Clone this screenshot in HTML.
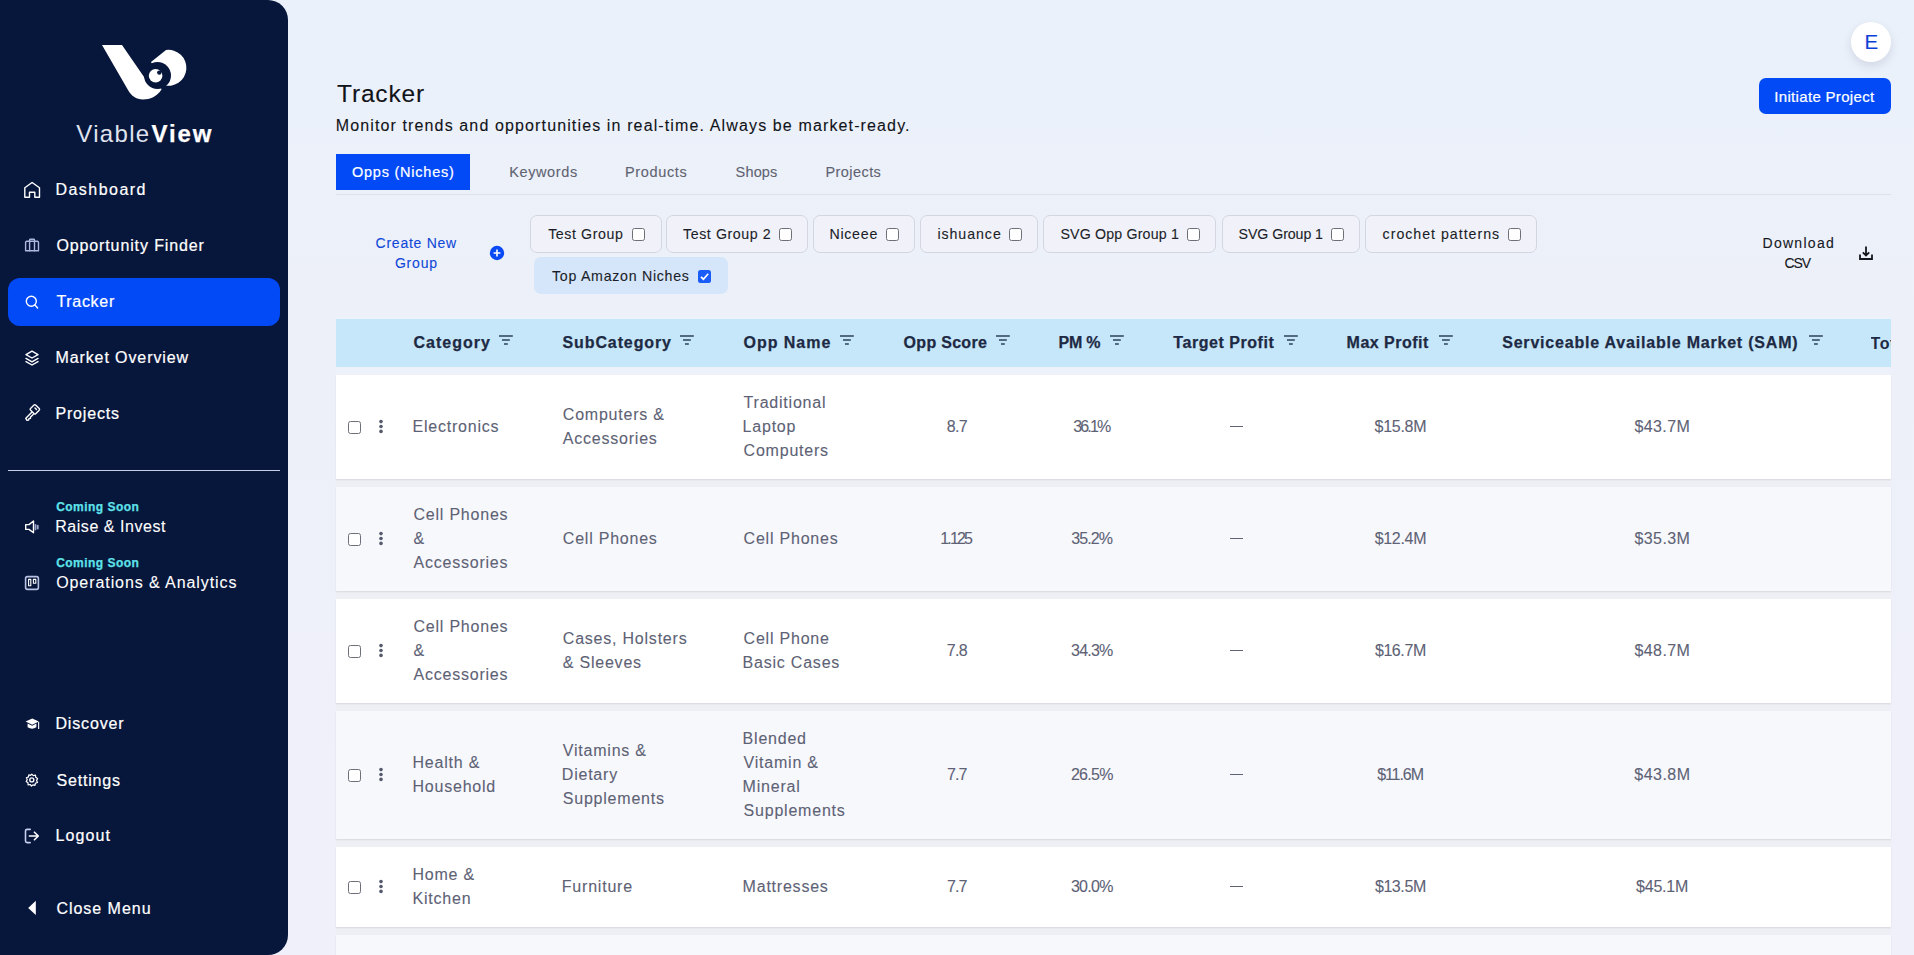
<!DOCTYPE html>
<html><head><meta charset="utf-8"><title>Tracker</title>
<style>
html,body{margin:0;padding:0;}
body{width:1914px;height:955px;overflow:hidden;position:relative;font-family:"Liberation Sans", sans-serif;background:linear-gradient(180deg,#eaf1fa 0%,#edf0f9 35%,#f0f0fa 100%);}
span{font-family:"Liberation Sans", sans-serif;}
</style></head><body>
<div style="position:absolute;left:0px;top:0px;width:288px;height:955px;background:#07163b;border-radius:0 20px 20px 0;"></div>
<svg style="position:absolute;left:0;top:0" width="288" height="160" viewBox="0 0 288 160">
<path d="M102,45 L122,45 L147.5,82 L157.5,75.5 L161.5,89.5 C157,96.5 150,99.5 143,99.5 C136,99.5 131,95.5 128,90 Z" fill="#fff"/>
<path d="M151,62 L166,50 A18,18 0 1 1 163,85 Z" fill="#fff"/>
<circle cx="157.5" cy="75.5" r="13.5" fill="#07163b"/>
<circle cx="155.6" cy="75.8" r="6.8" fill="#fff"/>
<circle cx="159.3" cy="72.6" r="2.2" fill="#07163b"/>
</svg>
<div style="position:absolute;left:8px;top:278px;width:272px;height:48px;background:#024af6;border-radius:12px;"></div>
<div style="position:absolute;left:8px;top:470px;width:272px;height:1px;background:#c9d0e6;"></div>
<svg style="position:absolute;left:0;top:160px" width="60" height="795" viewBox="0 160 60 795" fill="none" stroke="#fff" stroke-width="1.4" stroke-linejoin="round" stroke-linecap="round">
<path d="M24.8,197.3 V187.8 L32.1,182.5 L39.5,187.8 V197.3 H34.8 V192.2 H29.5 V197.3 Z"/>
<g stroke="#aeb8dc"><path d="M25.6,250.8 V242.5 Q25.6,241.3 26.8,241.3 H37.3 Q38.5,241.3 38.5,242.5 V250.8 Z"/><path d="M29.6,250.8 V241.3 M34.5,250.8 V241.3 M29.6,241.3 V240 Q29.6,239.3 30.4,239.3 H33.7 Q34.5,239.3 34.5,240 V241.3"/></g>
<circle cx="31.3" cy="301.2" r="5"/><path d="M35,305 L37.6,308"/>
<path d="M26,354.6 L32,351.2 L38,354.6 L32,358 Z"/><path d="M26,358.4 L32,361.8 L38,358.4"/><path d="M26,361.6 L32,365 L38,361.6"/>
<path d="M30.5,408.5 L34,405 Q34.8,404.3 35.6,405 L39.2,408.6 Q40,409.4 39.2,410.2 L35.7,413.7 Q34.9,414.5 34.1,413.7 L30.5,410.1 Q29.7,409.3 30.5,408.5 Z"/>
<path d="M31.8,412.3 L25.8,418.3 L26.8,420.2 L28.6,420 L29,418.6 L30.4,418.3 L30.6,417 L33.2,414.5"/><path d="M35,408 L36.5,409.5"/>
<path d="M25.7,524.6 H29 L33.5,521 V532.8 L29,529.4 H25.7 Z"/>
<path d="M35.5,524.8 V529.4 M37.8,525.6 V528.6" stroke="#9aa4c8" stroke-width="1.8"/>
<rect x="25.6" y="576.6" width="12.8" height="12.8" rx="1.8" stroke="#b8c2e2" stroke-width="1.6"/>
<rect x="28.6" y="579.4" width="2.2" height="6.3" stroke-width="1.1"/><rect x="33.4" y="579.4" width="2.4" height="3.9" stroke-width="1.1"/>
<g fill="#fff" stroke="none"><path d="M25.6,721.6 L32.2,718.6 L38.9,721.6 L32.2,724.8 Z"/><path d="M27.6,723.5 L32.2,725.8 L36.4,723.5 V727.3 Q32.2,730 27.6,727.3 Z"/><rect x="38.1" y="722" width="1.1" height="7"/></g>
<circle cx="31.8" cy="779.9" r="2"/>
<path d="M31.8,774.2 L33.3,775.6 L35.5,775.1 L35.7,777.2 L37.6,778.5 L36.6,780.4 L37.5,782.4 L35.4,783.2 L35,785.3 L32.9,784.9 L31.5,786 L30.2,784.5 L28.1,784.8 L28,782.8 L26.2,781.5 L27.2,779.6 L26.4,777.7 L28.5,776.9 L28.8,774.8 L30.5,775.3 Z" stroke-width="1.2"/>
<path d="M30.2,829.4 H27.2 Q25.5,829.4 25.5,831 V841 Q25.5,842.6 27.2,842.6 H30.2" stroke="#c7cfee" stroke-width="1.6"/>
<path d="M29.4,836 H38.3 M34.4,832.2 L38.3,836 L34.4,839.8" stroke-width="1.6"/>
<path d="M28.2,907.9 L35.8,900.8 V915 Z" fill="#fff" stroke="none"/>
</svg>
<div style="position:absolute;left:1851px;top:22px;width:40px;height:40px;background:#fff;border-radius:50%;box-shadow:0 4px 10px rgba(30,40,80,0.12);"></div>
<div style="position:absolute;left:1759px;top:78px;width:132px;height:36px;background:#024af6;border-radius:7px;"></div>
<div style="position:absolute;left:336px;top:154px;width:134px;height:36px;background:#024af6;"></div>
<div style="position:absolute;left:336px;top:194px;width:1555px;height:1px;background:#dfe2ea;"></div>
<svg style="position:absolute;left:489px;top:245px" width="16" height="16" viewBox="0 0 16 16"><circle cx="8" cy="8" r="7.2" fill="#0a4af5"/><path d="M8,4.6 V11.4 M4.6,8 H11.4" stroke="#fff" stroke-width="1.6"/></svg>
<div style="position:absolute;left:530.2px;top:215px;width:131.5px;height:38px;box-sizing:border-box;border:1px solid #d3d6e0;border-radius:7px;background:#f1f2f9;"></div>
<div style="position:absolute;left:632px;top:227.5px;width:13px;height:13px;box-sizing:border-box;border:1.2px solid #6e7079;border-radius:2.5px;background:#fff;"></div>
<div style="position:absolute;left:666.4px;top:215px;width:142.0px;height:38px;box-sizing:border-box;border:1px solid #d3d6e0;border-radius:7px;background:#f1f2f9;"></div>
<div style="position:absolute;left:778.9px;top:227.5px;width:13px;height:13px;box-sizing:border-box;border:1.2px solid #6e7079;border-radius:2.5px;background:#fff;"></div>
<div style="position:absolute;left:813.2px;top:215px;width:102.29999999999995px;height:38px;box-sizing:border-box;border:1px solid #d3d6e0;border-radius:7px;background:#f1f2f9;"></div>
<div style="position:absolute;left:886.2px;top:227.5px;width:13px;height:13px;box-sizing:border-box;border:1.2px solid #6e7079;border-radius:2.5px;background:#fff;"></div>
<div style="position:absolute;left:920.2px;top:215px;width:118.29999999999995px;height:38px;box-sizing:border-box;border:1px solid #d3d6e0;border-radius:7px;background:#f1f2f9;"></div>
<div style="position:absolute;left:1009px;top:227.5px;width:13px;height:13px;box-sizing:border-box;border:1.2px solid #6e7079;border-radius:2.5px;background:#fff;"></div>
<div style="position:absolute;left:1043.2px;top:215px;width:173.29999999999995px;height:38px;box-sizing:border-box;border:1px solid #d3d6e0;border-radius:7px;background:#f1f2f9;"></div>
<div style="position:absolute;left:1187px;top:227.5px;width:13px;height:13px;box-sizing:border-box;border:1.2px solid #6e7079;border-radius:2.5px;background:#fff;"></div>
<div style="position:absolute;left:1221.6px;top:215px;width:138.70000000000005px;height:38px;box-sizing:border-box;border:1px solid #d3d6e0;border-radius:7px;background:#f1f2f9;"></div>
<div style="position:absolute;left:1331.4px;top:227.5px;width:13px;height:13px;box-sizing:border-box;border:1.2px solid #6e7079;border-radius:2.5px;background:#fff;"></div>
<div style="position:absolute;left:1365.3px;top:215px;width:172.10000000000014px;height:38px;box-sizing:border-box;border:1px solid #d3d6e0;border-radius:7px;background:#f1f2f9;"></div>
<div style="position:absolute;left:1508.1px;top:227.5px;width:13px;height:13px;box-sizing:border-box;border:1.2px solid #6e7079;border-radius:2.5px;background:#fff;"></div>
<div style="position:absolute;left:534px;top:257px;width:194px;height:37px;background:#d5e6fb;border-radius:7px;"></div>
<svg style="position:absolute;left:698px;top:270px" width="13" height="13" viewBox="0 0 13 13"><rect x="0" y="0" width="13" height="13" rx="2.5" fill="#1a5cf8"/><path d="M3,6.8 L5.4,9.2 L10.2,3.8" stroke="#fff" stroke-width="1.7" fill="none"/></svg>
<svg style="position:absolute;left:1858px;top:245px" width="16" height="16" viewBox="0 0 16 16" fill="none" stroke="#15171d" stroke-width="1.8"><path d="M2,9.5 V14 H14 V9.5"/><path d="M8,1.5 V10.5 M4.8,7.3 L8,10.5 L11.2,7.3"/></svg>
<div style="position:absolute;left:336px;top:316px;width:1555px;height:59px;background:#edf2fa;"></div>
<div style="position:absolute;left:336px;top:375px;width:1555px;height:580px;background:#eeeff4;"></div>
<div style="position:absolute;left:336px;top:319px;width:1555px;height:48px;background:#c6e7f9;"></div>
<div style="position:absolute;left:336px;top:367px;width:1555px;height:8px;background:#edf1f9;"></div>
<svg style="position:absolute;left:499px;top:334px" width="14" height="12" viewBox="0 0 14 12" stroke="#536b80" stroke-width="1.8"><path d="M0,2 H13.8 M3,6 H10.8 M5,10 H8.8"/></svg>
<svg style="position:absolute;left:680px;top:334px" width="14" height="12" viewBox="0 0 14 12" stroke="#536b80" stroke-width="1.8"><path d="M0,2 H13.8 M3,6 H10.8 M5,10 H8.8"/></svg>
<svg style="position:absolute;left:840.2px;top:334px" width="14" height="12" viewBox="0 0 14 12" stroke="#536b80" stroke-width="1.8"><path d="M0,2 H13.8 M3,6 H10.8 M5,10 H8.8"/></svg>
<svg style="position:absolute;left:996px;top:334px" width="14" height="12" viewBox="0 0 14 12" stroke="#536b80" stroke-width="1.8"><path d="M0,2 H13.8 M3,6 H10.8 M5,10 H8.8"/></svg>
<svg style="position:absolute;left:1110.1px;top:334px" width="14" height="12" viewBox="0 0 14 12" stroke="#536b80" stroke-width="1.8"><path d="M0,2 H13.8 M3,6 H10.8 M5,10 H8.8"/></svg>
<svg style="position:absolute;left:1284.1px;top:334px" width="14" height="12" viewBox="0 0 14 12" stroke="#536b80" stroke-width="1.8"><path d="M0,2 H13.8 M3,6 H10.8 M5,10 H8.8"/></svg>
<svg style="position:absolute;left:1439.3px;top:334px" width="14" height="12" viewBox="0 0 14 12" stroke="#536b80" stroke-width="1.8"><path d="M0,2 H13.8 M3,6 H10.8 M5,10 H8.8"/></svg>
<svg style="position:absolute;left:1808.6px;top:334px" width="14" height="12" viewBox="0 0 14 12" stroke="#536b80" stroke-width="1.8"><path d="M0,2 H13.8 M3,6 H10.8 M5,10 H8.8"/></svg>
<div style="position:absolute;left:1871px;top:319px;width:20px;height:48px;overflow:hidden;"><span style="position:absolute;left:-0.5px;top:16.5px;font-family:&quot;Liberation Sans&quot;, sans-serif;font-size:16px;line-height:16px;font-weight:700;color:#1e2a44;letter-spacing:0.6px;white-space:nowrap">Total</span></div>
<div style="position:absolute;left:336px;top:375px;width:1555px;height:104px;background:#ffffff;box-shadow:0 1px 1.5px rgba(20,20,40,0.10);"></div>
<div style="position:absolute;left:348px;top:421.0px;width:13px;height:13px;box-sizing:border-box;border:1.2px solid #6e7079;border-radius:2.5px;background:#fff;"></div>
<svg style="position:absolute;left:377px;top:419.0px" width="8" height="16" viewBox="0 0 8 16" fill="#545a6b"><circle cx="4" cy="2.6" r="1.8"/><circle cx="4" cy="7.5" r="1.8"/><circle cx="4" cy="12.4" r="1.8"/></svg>
<div style="position:absolute;left:1229.5px;top:425.8px;width:13px;height:1.7px;background:#5d6275;"></div>
<div style="position:absolute;left:336px;top:487px;width:1555px;height:104px;background:#f7f8fc;box-shadow:0 1px 1.5px rgba(20,20,40,0.10);"></div>
<div style="position:absolute;left:348px;top:533.0px;width:13px;height:13px;box-sizing:border-box;border:1.2px solid #6e7079;border-radius:2.5px;background:#fff;"></div>
<svg style="position:absolute;left:377px;top:531.0px" width="8" height="16" viewBox="0 0 8 16" fill="#545a6b"><circle cx="4" cy="2.6" r="1.8"/><circle cx="4" cy="7.5" r="1.8"/><circle cx="4" cy="12.4" r="1.8"/></svg>
<div style="position:absolute;left:1229.5px;top:537.8px;width:13px;height:1.7px;background:#5d6275;"></div>
<div style="position:absolute;left:336px;top:599px;width:1555px;height:104px;background:#ffffff;box-shadow:0 1px 1.5px rgba(20,20,40,0.10);"></div>
<div style="position:absolute;left:348px;top:645.0px;width:13px;height:13px;box-sizing:border-box;border:1.2px solid #6e7079;border-radius:2.5px;background:#fff;"></div>
<svg style="position:absolute;left:377px;top:643.0px" width="8" height="16" viewBox="0 0 8 16" fill="#545a6b"><circle cx="4" cy="2.6" r="1.8"/><circle cx="4" cy="7.5" r="1.8"/><circle cx="4" cy="12.4" r="1.8"/></svg>
<div style="position:absolute;left:1229.5px;top:649.8px;width:13px;height:1.7px;background:#5d6275;"></div>
<div style="position:absolute;left:336px;top:711px;width:1555px;height:128px;background:#f7f8fc;box-shadow:0 1px 1.5px rgba(20,20,40,0.10);"></div>
<div style="position:absolute;left:348px;top:769.0px;width:13px;height:13px;box-sizing:border-box;border:1.2px solid #6e7079;border-radius:2.5px;background:#fff;"></div>
<svg style="position:absolute;left:377px;top:767.0px" width="8" height="16" viewBox="0 0 8 16" fill="#545a6b"><circle cx="4" cy="2.6" r="1.8"/><circle cx="4" cy="7.5" r="1.8"/><circle cx="4" cy="12.4" r="1.8"/></svg>
<div style="position:absolute;left:1229.5px;top:773.8px;width:13px;height:1.7px;background:#5d6275;"></div>
<div style="position:absolute;left:336px;top:847px;width:1555px;height:80px;background:#ffffff;box-shadow:0 1px 1.5px rgba(20,20,40,0.10);"></div>
<div style="position:absolute;left:348px;top:881.0px;width:13px;height:13px;box-sizing:border-box;border:1.2px solid #6e7079;border-radius:2.5px;background:#fff;"></div>
<svg style="position:absolute;left:377px;top:879.0px" width="8" height="16" viewBox="0 0 8 16" fill="#545a6b"><circle cx="4" cy="2.6" r="1.8"/><circle cx="4" cy="7.5" r="1.8"/><circle cx="4" cy="12.4" r="1.8"/></svg>
<div style="position:absolute;left:1229.5px;top:885.8px;width:13px;height:1.7px;background:#5d6275;"></div>
<div style="position:absolute;left:336px;top:935px;width:1555px;height:20px;background:#f7f8fc;box-shadow:0 1px 1.5px rgba(20,20,40,0.10);"></div>
<span style="position:absolute;left:76.30px;top:122.00px;font-size:24px;line-height:24px;font-weight:300;color:#dfe3ee;letter-spacing:1.313px;white-space:pre;z-index:5">Viable</span>
<span style="position:absolute;left:151.50px;top:122.00px;font-size:24px;line-height:24px;font-weight:700;color:#fff;letter-spacing:1.903px;white-space:pre;-webkit-text-stroke:0.25px #fff;z-index:5">View</span>
<span style="position:absolute;left:55.40px;top:182.00px;font-size:16px;line-height:16px;font-weight:500;color:#fff;letter-spacing:1.478px;white-space:pre;-webkit-text-stroke:0.22px #fff;z-index:5">Dashboard</span>
<span style="position:absolute;left:56.40px;top:238.00px;font-size:16px;line-height:16px;font-weight:500;color:#fff;letter-spacing:0.884px;white-space:pre;-webkit-text-stroke:0.22px #fff;z-index:5">Opportunity Finder</span>
<span style="position:absolute;left:56.40px;top:294.00px;font-size:16px;line-height:16px;font-weight:500;color:#fff;letter-spacing:0.699px;white-space:pre;-webkit-text-stroke:0.22px #fff;z-index:5">Tracker</span>
<span style="position:absolute;left:55.40px;top:350.00px;font-size:16px;line-height:16px;font-weight:500;color:#fff;letter-spacing:0.909px;white-space:pre;-webkit-text-stroke:0.22px #fff;z-index:5">Market Overview</span>
<span style="position:absolute;left:55.40px;top:406.00px;font-size:16px;line-height:16px;font-weight:500;color:#fff;letter-spacing:0.843px;white-space:pre;-webkit-text-stroke:0.22px #fff;z-index:5">Projects</span>
<span style="position:absolute;left:55.40px;top:716.00px;font-size:16px;line-height:16px;font-weight:500;color:#fff;letter-spacing:0.856px;white-space:pre;-webkit-text-stroke:0.22px #fff;z-index:5">Discover</span>
<span style="position:absolute;left:56.40px;top:773.00px;font-size:16px;line-height:16px;font-weight:500;color:#fff;letter-spacing:0.841px;white-space:pre;-webkit-text-stroke:0.22px #fff;z-index:5">Settings</span>
<span style="position:absolute;left:55.40px;top:828.00px;font-size:16px;line-height:16px;font-weight:500;color:#fff;letter-spacing:1.102px;white-space:pre;-webkit-text-stroke:0.22px #fff;z-index:5">Logout</span>
<span style="position:absolute;left:56.40px;top:901.00px;font-size:16px;line-height:16px;font-weight:500;color:#fff;letter-spacing:0.980px;white-space:pre;-webkit-text-stroke:0.22px #fff;z-index:5">Close Menu</span>
<span style="position:absolute;left:55.20px;top:519.00px;font-size:16px;line-height:16px;font-weight:400;color:#fff;letter-spacing:0.545px;white-space:pre;-webkit-text-stroke:0.1px #fff;z-index:5">Raise &amp; Invest</span>
<span style="position:absolute;left:56.20px;top:575.00px;font-size:16px;line-height:16px;font-weight:400;color:#fff;letter-spacing:0.921px;white-space:pre;-webkit-text-stroke:0.1px #fff;z-index:5">Operations &amp; Analytics</span>
<span style="position:absolute;left:56.20px;top:501.00px;font-size:12px;line-height:12px;font-weight:700;color:#5ee2ea;letter-spacing:0.464px;white-space:pre;-webkit-text-stroke:0.25px #5ee2ea;z-index:5">Coming Soon</span>
<span style="position:absolute;left:56.20px;top:557.00px;font-size:12px;line-height:12px;font-weight:700;color:#5ee2ea;letter-spacing:0.464px;white-space:pre;-webkit-text-stroke:0.25px #5ee2ea;z-index:5">Coming Soon</span>
<span style="position:absolute;left:337.00px;top:82.00px;font-size:24.5px;line-height:24.5px;font-weight:400;color:#111318;letter-spacing:0.839px;white-space:pre;-webkit-text-stroke:0.1px #111318;z-index:5">Tracker</span>
<span style="position:absolute;left:335.70px;top:118.00px;font-size:16px;line-height:16px;font-weight:400;color:#111318;letter-spacing:1.129px;white-space:pre;-webkit-text-stroke:0.1px #111318;z-index:5">Monitor trends and opportunities in real-time. Always be market-ready.</span>
<span style="position:absolute;left:1864.60px;top:32.00px;font-size:20.5px;line-height:20.5px;font-weight:400;color:#0b3fd6;letter-spacing:0.000px;white-space:pre;-webkit-text-stroke:0.1px #0b3fd6;z-index:5">E</span>
<span style="position:absolute;left:1774.30px;top:89.00px;font-size:15px;line-height:15px;font-weight:500;color:#fff;letter-spacing:0.321px;white-space:pre;-webkit-text-stroke:0.22px #fff;z-index:5">Initiate Project</span>
<span style="position:absolute;left:352.00px;top:165.00px;font-size:14.5px;line-height:14.5px;font-weight:500;color:#fff;letter-spacing:0.764px;white-space:pre;-webkit-text-stroke:0.22px #fff;z-index:5">Opps (Niches)</span>
<span style="position:absolute;left:509.20px;top:165.00px;font-size:14.5px;line-height:14.5px;font-weight:400;color:#5f6371;letter-spacing:0.612px;white-space:pre;-webkit-text-stroke:0.1px #5f6371;z-index:5">Keywords</span>
<span style="position:absolute;left:624.90px;top:165.00px;font-size:14.5px;line-height:14.5px;font-weight:400;color:#5f6371;letter-spacing:0.661px;white-space:pre;-webkit-text-stroke:0.1px #5f6371;z-index:5">Products</span>
<span style="position:absolute;left:735.60px;top:165.00px;font-size:14.5px;line-height:14.5px;font-weight:400;color:#5f6371;letter-spacing:0.159px;white-space:pre;-webkit-text-stroke:0.1px #5f6371;z-index:5">Shops</span>
<span style="position:absolute;left:825.50px;top:165.00px;font-size:14.5px;line-height:14.5px;font-weight:400;color:#5f6371;letter-spacing:0.425px;white-space:pre;-webkit-text-stroke:0.1px #5f6371;z-index:5">Projects</span>
<span style="position:absolute;left:375.60px;top:236.00px;font-size:14px;line-height:14px;font-weight:400;color:#0f47d8;letter-spacing:0.744px;white-space:pre;-webkit-text-stroke:0.1px #0f47d8;z-index:5">Create New</span>
<span style="position:absolute;left:394.90px;top:256.00px;font-size:14px;line-height:14px;font-weight:400;color:#0f47d8;letter-spacing:0.819px;white-space:pre;-webkit-text-stroke:0.1px #0f47d8;z-index:5">Group</span>
<span style="position:absolute;left:548.20px;top:227.00px;font-size:14.2px;line-height:14.2px;font-weight:400;color:#1b1e28;letter-spacing:0.589px;white-space:pre;-webkit-text-stroke:0.1px #1b1e28;z-index:5">Test Group</span>
<span style="position:absolute;left:683.00px;top:227.00px;font-size:14.2px;line-height:14.2px;font-weight:400;color:#1b1e28;letter-spacing:0.588px;white-space:pre;-webkit-text-stroke:0.1px #1b1e28;z-index:5">Test Group 2</span>
<span style="position:absolute;left:829.40px;top:227.00px;font-size:14.2px;line-height:14.2px;font-weight:400;color:#1b1e28;letter-spacing:0.746px;white-space:pre;-webkit-text-stroke:0.1px #1b1e28;z-index:5">Niceee</span>
<span style="position:absolute;left:937.40px;top:227.00px;font-size:14.2px;line-height:14.2px;font-weight:400;color:#1b1e28;letter-spacing:0.943px;white-space:pre;-webkit-text-stroke:0.1px #1b1e28;z-index:5">ishuance</span>
<span style="position:absolute;left:1060.40px;top:227.00px;font-size:14.2px;line-height:14.2px;font-weight:400;color:#1b1e28;letter-spacing:0.176px;white-space:pre;-webkit-text-stroke:0.1px #1b1e28;z-index:5">SVG Opp Group 1</span>
<span style="position:absolute;left:1238.60px;top:227.00px;font-size:14.2px;line-height:14.2px;font-weight:400;color:#1b1e28;letter-spacing:-0.078px;white-space:pre;-webkit-text-stroke:0.1px #1b1e28;z-index:5">SVG Group 1</span>
<span style="position:absolute;left:1382.60px;top:227.00px;font-size:14.2px;line-height:14.2px;font-weight:400;color:#1b1e28;letter-spacing:0.991px;white-space:pre;-webkit-text-stroke:0.1px #1b1e28;z-index:5">crochet patterns</span>
<span style="position:absolute;left:552.00px;top:269.00px;font-size:14.2px;line-height:14.2px;font-weight:400;color:#1b1e28;letter-spacing:0.720px;white-space:pre;-webkit-text-stroke:0.1px #1b1e28;z-index:5">Top Amazon Niches</span>
<span style="position:absolute;left:1762.50px;top:236.00px;font-size:14px;line-height:14px;font-weight:400;color:#15171d;letter-spacing:1.289px;white-space:pre;-webkit-text-stroke:0.1px #15171d;z-index:5">Download</span>
<span style="position:absolute;left:1784.40px;top:256.00px;font-size:14px;line-height:14px;font-weight:400;color:#15171d;letter-spacing:-1.024px;white-space:pre;-webkit-text-stroke:0.1px #15171d;z-index:5">CSV</span>
<span style="position:absolute;left:413.50px;top:335.00px;font-size:16px;line-height:16px;font-weight:700;color:#1e2a44;letter-spacing:0.992px;white-space:pre;-webkit-text-stroke:0.25px #1e2a44;z-index:5">Category</span>
<span style="position:absolute;left:562.50px;top:335.00px;font-size:16px;line-height:16px;font-weight:700;color:#1e2a44;letter-spacing:0.893px;white-space:pre;-webkit-text-stroke:0.25px #1e2a44;z-index:5">SubCategory</span>
<span style="position:absolute;left:743.60px;top:335.00px;font-size:16px;line-height:16px;font-weight:700;color:#1e2a44;letter-spacing:0.955px;white-space:pre;-webkit-text-stroke:0.25px #1e2a44;z-index:5">Opp Name</span>
<span style="position:absolute;left:903.60px;top:335.00px;font-size:16px;line-height:16px;font-weight:700;color:#1e2a44;letter-spacing:0.287px;white-space:pre;-webkit-text-stroke:0.25px #1e2a44;z-index:5">Opp Score</span>
<span style="position:absolute;left:1058.50px;top:335.00px;font-size:16px;line-height:16px;font-weight:700;color:#1e2a44;letter-spacing:-0.248px;white-space:pre;-webkit-text-stroke:0.25px #1e2a44;z-index:5">PM %</span>
<span style="position:absolute;left:1173.30px;top:335.00px;font-size:16px;line-height:16px;font-weight:700;color:#1e2a44;letter-spacing:0.550px;white-space:pre;-webkit-text-stroke:0.25px #1e2a44;z-index:5">Target Profit</span>
<span style="position:absolute;left:1346.60px;top:335.00px;font-size:16px;line-height:16px;font-weight:700;color:#1e2a44;letter-spacing:0.487px;white-space:pre;-webkit-text-stroke:0.25px #1e2a44;z-index:5">Max Profit</span>
<span style="position:absolute;left:1502.20px;top:335.00px;font-size:16px;line-height:16px;font-weight:700;color:#1e2a44;letter-spacing:0.797px;white-space:pre;-webkit-text-stroke:0.25px #1e2a44;z-index:5">Serviceable Available Market (SAM)</span>
<span style="position:absolute;left:412.50px;top:419.00px;font-size:16px;line-height:16px;font-weight:400;color:#5d6275;letter-spacing:0.780px;white-space:pre;-webkit-text-stroke:0.1px #5d6275;z-index:5">Electronics</span>
<span style="position:absolute;left:562.80px;top:407.00px;font-size:16px;line-height:16px;font-weight:400;color:#5d6275;letter-spacing:0.780px;white-space:pre;-webkit-text-stroke:0.1px #5d6275;z-index:5">Computers &amp;</span>
<span style="position:absolute;left:562.80px;top:431.00px;font-size:16px;line-height:16px;font-weight:400;color:#5d6275;letter-spacing:0.780px;white-space:pre;-webkit-text-stroke:0.1px #5d6275;z-index:5">Accessories</span>
<span style="position:absolute;left:743.60px;top:395.00px;font-size:16px;line-height:16px;font-weight:400;color:#5d6275;letter-spacing:0.780px;white-space:pre;-webkit-text-stroke:0.1px #5d6275;z-index:5">Traditional</span>
<span style="position:absolute;left:742.60px;top:419.00px;font-size:16px;line-height:16px;font-weight:400;color:#5d6275;letter-spacing:0.780px;white-space:pre;-webkit-text-stroke:0.1px #5d6275;z-index:5">Laptop</span>
<span style="position:absolute;left:743.60px;top:443.00px;font-size:16px;line-height:16px;font-weight:400;color:#5d6275;letter-spacing:0.780px;white-space:pre;-webkit-text-stroke:0.1px #5d6275;z-index:5">Computers</span>
<span style="position:absolute;left:946.65px;top:419.00px;font-size:16px;line-height:16px;font-weight:400;color:#5d6275;letter-spacing:-0.622px;white-space:pre;-webkit-text-stroke:0.1px #5d6275;z-index:5">8.7</span>
<span style="position:absolute;left:1073.30px;top:419.00px;font-size:16px;line-height:16px;font-weight:400;color:#5d6275;letter-spacing:-1.885px;white-space:pre;-webkit-text-stroke:0.1px #5d6275;z-index:5">36.1%</span>
<span style="position:absolute;left:1374.55px;top:419.00px;font-size:16px;line-height:16px;font-weight:400;color:#5d6275;letter-spacing:-0.268px;white-space:pre;-webkit-text-stroke:0.1px #5d6275;z-index:5">$15.8M</span>
<span style="position:absolute;left:1634.55px;top:419.00px;font-size:16px;line-height:16px;font-weight:400;color:#5d6275;letter-spacing:0.372px;white-space:pre;-webkit-text-stroke:0.1px #5d6275;z-index:5">$43.7M</span>
<span style="position:absolute;left:413.50px;top:507.00px;font-size:16px;line-height:16px;font-weight:400;color:#5d6275;letter-spacing:0.780px;white-space:pre;-webkit-text-stroke:0.1px #5d6275;z-index:5">Cell Phones</span>
<span style="position:absolute;left:413.50px;top:531.00px;font-size:16px;line-height:16px;font-weight:400;color:#5d6275;letter-spacing:0.780px;white-space:pre;-webkit-text-stroke:0.1px #5d6275;z-index:5">&amp;</span>
<span style="position:absolute;left:413.50px;top:555.00px;font-size:16px;line-height:16px;font-weight:400;color:#5d6275;letter-spacing:0.780px;white-space:pre;-webkit-text-stroke:0.1px #5d6275;z-index:5">Accessories</span>
<span style="position:absolute;left:562.80px;top:531.00px;font-size:16px;line-height:16px;font-weight:400;color:#5d6275;letter-spacing:0.780px;white-space:pre;-webkit-text-stroke:0.1px #5d6275;z-index:5">Cell Phones</span>
<span style="position:absolute;left:743.60px;top:531.00px;font-size:16px;line-height:16px;font-weight:400;color:#5d6275;letter-spacing:0.780px;white-space:pre;-webkit-text-stroke:0.1px #5d6275;z-index:5">Cell Phones</span>
<span style="position:absolute;left:940.30px;top:531.00px;font-size:16px;line-height:16px;font-weight:400;color:#5d6275;letter-spacing:-1.835px;white-space:pre;-webkit-text-stroke:0.1px #5d6275;z-index:5">1.125</span>
<span style="position:absolute;left:1071.35px;top:531.00px;font-size:16px;line-height:16px;font-weight:400;color:#5d6275;letter-spacing:-0.910px;white-space:pre;-webkit-text-stroke:0.1px #5d6275;z-index:5">35.2%</span>
<span style="position:absolute;left:1374.65px;top:531.00px;font-size:16px;line-height:16px;font-weight:400;color:#5d6275;letter-spacing:-0.308px;white-space:pre;-webkit-text-stroke:0.1px #5d6275;z-index:5">$12.4M</span>
<span style="position:absolute;left:1634.40px;top:531.00px;font-size:16px;line-height:16px;font-weight:400;color:#5d6275;letter-spacing:0.432px;white-space:pre;-webkit-text-stroke:0.1px #5d6275;z-index:5">$35.3M</span>
<span style="position:absolute;left:413.50px;top:619.00px;font-size:16px;line-height:16px;font-weight:400;color:#5d6275;letter-spacing:0.780px;white-space:pre;-webkit-text-stroke:0.1px #5d6275;z-index:5">Cell Phones</span>
<span style="position:absolute;left:413.50px;top:643.00px;font-size:16px;line-height:16px;font-weight:400;color:#5d6275;letter-spacing:0.780px;white-space:pre;-webkit-text-stroke:0.1px #5d6275;z-index:5">&amp;</span>
<span style="position:absolute;left:413.50px;top:667.00px;font-size:16px;line-height:16px;font-weight:400;color:#5d6275;letter-spacing:0.780px;white-space:pre;-webkit-text-stroke:0.1px #5d6275;z-index:5">Accessories</span>
<span style="position:absolute;left:562.80px;top:631.00px;font-size:16px;line-height:16px;font-weight:400;color:#5d6275;letter-spacing:0.780px;white-space:pre;-webkit-text-stroke:0.1px #5d6275;z-index:5">Cases, Holsters</span>
<span style="position:absolute;left:562.80px;top:655.00px;font-size:16px;line-height:16px;font-weight:400;color:#5d6275;letter-spacing:0.780px;white-space:pre;-webkit-text-stroke:0.1px #5d6275;z-index:5">&amp; Sleeves</span>
<span style="position:absolute;left:743.60px;top:631.00px;font-size:16px;line-height:16px;font-weight:400;color:#5d6275;letter-spacing:0.780px;white-space:pre;-webkit-text-stroke:0.1px #5d6275;z-index:5">Cell Phone</span>
<span style="position:absolute;left:742.60px;top:655.00px;font-size:16px;line-height:16px;font-weight:400;color:#5d6275;letter-spacing:0.780px;white-space:pre;-webkit-text-stroke:0.1px #5d6275;z-index:5">Basic Cases</span>
<span style="position:absolute;left:946.70px;top:643.00px;font-size:16px;line-height:16px;font-weight:400;color:#5d6275;letter-spacing:-0.672px;white-space:pre;-webkit-text-stroke:0.1px #5d6275;z-index:5">7.8</span>
<span style="position:absolute;left:1071.10px;top:643.00px;font-size:16px;line-height:16px;font-weight:400;color:#5d6275;letter-spacing:-0.785px;white-space:pre;-webkit-text-stroke:0.1px #5d6275;z-index:5">34.3%</span>
<span style="position:absolute;left:1374.90px;top:643.00px;font-size:16px;line-height:16px;font-weight:400;color:#5d6275;letter-spacing:-0.408px;white-space:pre;-webkit-text-stroke:0.1px #5d6275;z-index:5">$16.7M</span>
<span style="position:absolute;left:1634.40px;top:643.00px;font-size:16px;line-height:16px;font-weight:400;color:#5d6275;letter-spacing:0.432px;white-space:pre;-webkit-text-stroke:0.1px #5d6275;z-index:5">$48.7M</span>
<span style="position:absolute;left:412.50px;top:755.00px;font-size:16px;line-height:16px;font-weight:400;color:#5d6275;letter-spacing:0.780px;white-space:pre;-webkit-text-stroke:0.1px #5d6275;z-index:5">Health &amp;</span>
<span style="position:absolute;left:412.50px;top:779.00px;font-size:16px;line-height:16px;font-weight:400;color:#5d6275;letter-spacing:0.780px;white-space:pre;-webkit-text-stroke:0.1px #5d6275;z-index:5">Household</span>
<span style="position:absolute;left:562.80px;top:743.00px;font-size:16px;line-height:16px;font-weight:400;color:#5d6275;letter-spacing:0.780px;white-space:pre;-webkit-text-stroke:0.1px #5d6275;z-index:5">Vitamins &amp;</span>
<span style="position:absolute;left:561.80px;top:767.00px;font-size:16px;line-height:16px;font-weight:400;color:#5d6275;letter-spacing:0.780px;white-space:pre;-webkit-text-stroke:0.1px #5d6275;z-index:5">Dietary</span>
<span style="position:absolute;left:562.80px;top:791.00px;font-size:16px;line-height:16px;font-weight:400;color:#5d6275;letter-spacing:0.780px;white-space:pre;-webkit-text-stroke:0.1px #5d6275;z-index:5">Supplements</span>
<span style="position:absolute;left:742.60px;top:731.00px;font-size:16px;line-height:16px;font-weight:400;color:#5d6275;letter-spacing:0.780px;white-space:pre;-webkit-text-stroke:0.1px #5d6275;z-index:5">Blended</span>
<span style="position:absolute;left:743.60px;top:755.00px;font-size:16px;line-height:16px;font-weight:400;color:#5d6275;letter-spacing:0.780px;white-space:pre;-webkit-text-stroke:0.1px #5d6275;z-index:5">Vitamin &amp;</span>
<span style="position:absolute;left:742.60px;top:779.00px;font-size:16px;line-height:16px;font-weight:400;color:#5d6275;letter-spacing:0.780px;white-space:pre;-webkit-text-stroke:0.1px #5d6275;z-index:5">Mineral</span>
<span style="position:absolute;left:743.60px;top:803.00px;font-size:16px;line-height:16px;font-weight:400;color:#5d6275;letter-spacing:0.780px;white-space:pre;-webkit-text-stroke:0.1px #5d6275;z-index:5">Supplements</span>
<span style="position:absolute;left:946.95px;top:767.00px;font-size:16px;line-height:16px;font-weight:400;color:#5d6275;letter-spacing:-0.922px;white-space:pre;-webkit-text-stroke:0.1px #5d6275;z-index:5">7.7</span>
<span style="position:absolute;left:1070.90px;top:767.00px;font-size:16px;line-height:16px;font-weight:400;color:#5d6275;letter-spacing:-0.685px;white-space:pre;-webkit-text-stroke:0.1px #5d6275;z-index:5">26.5%</span>
<span style="position:absolute;left:1377.15px;top:767.00px;font-size:16px;line-height:16px;font-weight:400;color:#5d6275;letter-spacing:-1.070px;white-space:pre;-webkit-text-stroke:0.1px #5d6275;z-index:5">$11.6M</span>
<span style="position:absolute;left:1634.25px;top:767.00px;font-size:16px;line-height:16px;font-weight:400;color:#5d6275;letter-spacing:0.492px;white-space:pre;-webkit-text-stroke:0.1px #5d6275;z-index:5">$43.8M</span>
<span style="position:absolute;left:412.50px;top:867.00px;font-size:16px;line-height:16px;font-weight:400;color:#5d6275;letter-spacing:0.780px;white-space:pre;-webkit-text-stroke:0.1px #5d6275;z-index:5">Home &amp;</span>
<span style="position:absolute;left:412.50px;top:891.00px;font-size:16px;line-height:16px;font-weight:400;color:#5d6275;letter-spacing:0.780px;white-space:pre;-webkit-text-stroke:0.1px #5d6275;z-index:5">Kitchen</span>
<span style="position:absolute;left:561.80px;top:879.00px;font-size:16px;line-height:16px;font-weight:400;color:#5d6275;letter-spacing:0.780px;white-space:pre;-webkit-text-stroke:0.1px #5d6275;z-index:5">Furniture</span>
<span style="position:absolute;left:742.60px;top:879.00px;font-size:16px;line-height:16px;font-weight:400;color:#5d6275;letter-spacing:0.780px;white-space:pre;-webkit-text-stroke:0.1px #5d6275;z-index:5">Mattresses</span>
<span style="position:absolute;left:946.95px;top:879.00px;font-size:16px;line-height:16px;font-weight:400;color:#5d6275;letter-spacing:-0.922px;white-space:pre;-webkit-text-stroke:0.1px #5d6275;z-index:5">7.7</span>
<span style="position:absolute;left:1070.90px;top:879.00px;font-size:16px;line-height:16px;font-weight:400;color:#5d6275;letter-spacing:-0.685px;white-space:pre;-webkit-text-stroke:0.1px #5d6275;z-index:5">30.0%</span>
<span style="position:absolute;left:1374.90px;top:879.00px;font-size:16px;line-height:16px;font-weight:400;color:#5d6275;letter-spacing:-0.408px;white-space:pre;-webkit-text-stroke:0.1px #5d6275;z-index:5">$13.5M</span>
<span style="position:absolute;left:1636.00px;top:879.00px;font-size:16px;line-height:16px;font-weight:400;color:#5d6275;letter-spacing:-0.208px;white-space:pre;-webkit-text-stroke:0.1px #5d6275;z-index:5">$45.1M</span>
</body></html>
